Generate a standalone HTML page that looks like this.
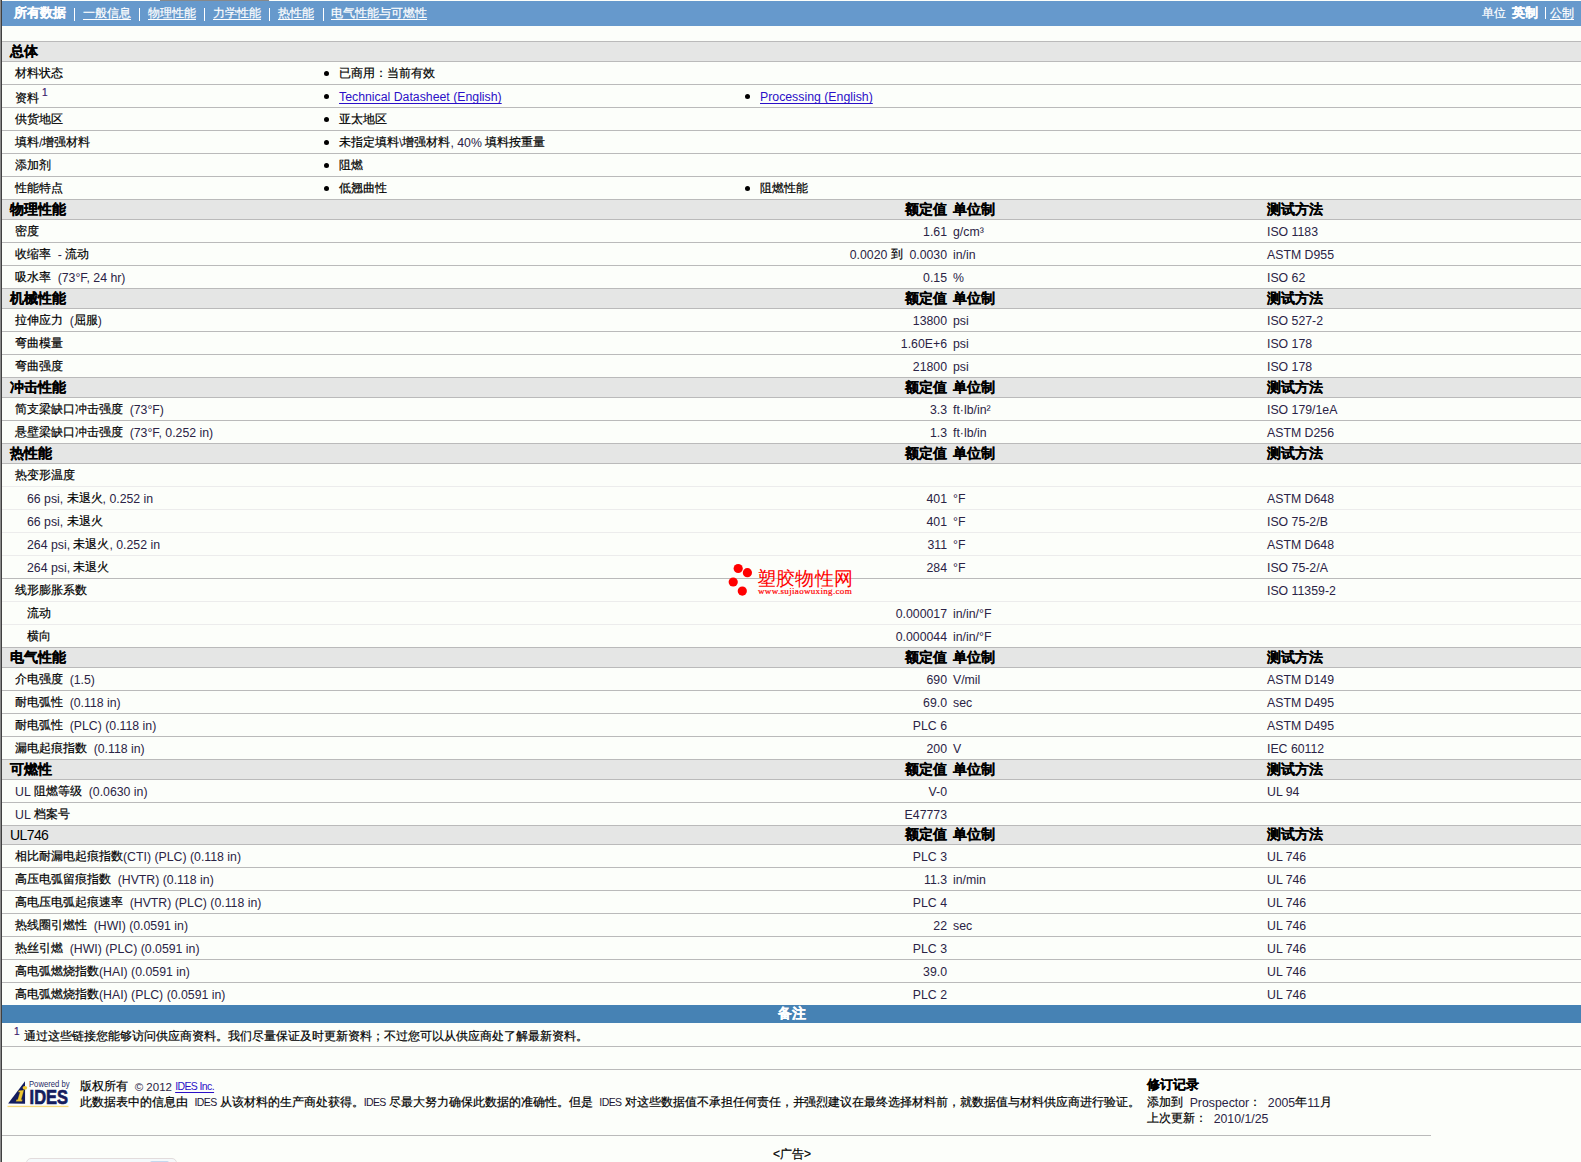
<!DOCTYPE html><html><head><meta charset="utf-8"><style>
body{margin:0;width:1581px;height:1162px;overflow:hidden;background:#fcfefa;-webkit-text-stroke:0.2px currentColor;font-family:"Liberation Sans",sans-serif;font-size:12px;color:#000;position:relative}
.a{position:absolute;white-space:nowrap}
.ln{position:absolute;left:2px;width:1579px;height:1px;background:#bababa}
.lt{position:absolute;left:2px;width:1579px;height:1px;background:#ececec}
.hb{position:absolute;left:2px;width:1579px;background:#e5e6e5}
.t{position:absolute;white-space:nowrap;line-height:22px;height:22px}
.th{position:absolute;white-space:nowrap;line-height:19px;height:19px;font-weight:bold;font-size:13.6px}
.th .l{font-size:12.5px;top:0}
.l{font-size:12.3px;color:#2a2345;position:relative;top:1px;-webkit-text-stroke:0}
.f,a,svg text{-webkit-text-stroke:0}
.r{text-align:right}
.f{font-size:10.5px;letter-spacing:-0.6px;color:#1d1635}
a{color:#2b10c8;text-decoration:underline;text-underline-offset:2px;text-decoration-skip-ink:none}
a .l{color:#2b10c8}
u{text-underline-offset:2px;text-decoration-skip-ink:none}
sup{font-size:9px;vertical-align:top;position:relative;top:-2px;color:#3b1a6a;margin-left:4px;line-height:9px}
.bul{position:absolute;width:5px;height:5px;border-radius:50%;background:#000}
.nav{color:#fff}
.nav span{position:absolute;white-space:nowrap;top:1px;line-height:24px}

</style></head><body>
<div class="a" style="left:0;top:0;width:1px;height:1162px;background:#8a8a8a"></div>
<div class="a" style="left:1px;top:0;width:1px;height:1162px;background:#404040"></div>
<div class="a" style="left:160px;top:0;width:109px;height:1px;background:#888"></div>
<div class="a" style="left:2px;top:1px;width:1579px;height:25px;background:#6699cc"></div>
<div class="a nav " style="left:14px;top:1px;line-height:24px;color:#fff"><b style="font-size:12.8px">所有数据</b></div>
<div class="a" style="left:74px;top:8px;width:1px;height:13px;background:#fff"></div>
<div class="a" style="left:139px;top:8px;width:1px;height:13px;background:#fff"></div>
<div class="a" style="left:204px;top:8px;width:1px;height:13px;background:#fff"></div>
<div class="a" style="left:269px;top:8px;width:1px;height:13px;background:#fff"></div>
<div class="a" style="left:323px;top:8px;width:1px;height:13px;background:#fff"></div>
<div class="a" style="left:1545px;top:7px;width:1px;height:12px;background:#fff"></div>
<div class="a nav " style="left:83px;top:1px;line-height:24px;color:#fff"><u>一般信息</u></div>
<div class="a nav " style="left:148px;top:1px;line-height:24px;color:#fff"><u>物理性能</u></div>
<div class="a nav " style="left:213px;top:1px;line-height:24px;color:#fff"><u>力学性能</u></div>
<div class="a nav " style="left:278px;top:1px;line-height:24px;color:#fff"><u>热性能</u></div>
<div class="a nav " style="left:331px;top:1px;line-height:24px;color:#fff"><u>电气性能与可燃性</u></div>
<div class="a nav " style="left:1482px;top:1px;line-height:24px;color:#fff">单位</div>
<div class="a nav " style="left:1512px;top:1px;line-height:24px;color:#fff"><b style="font-size:13px">英制</b></div>
<div class="a nav " style="left:1550px;top:1px;line-height:24px;color:#fff"><u>公制</u></div>
<div class="ln" style="top:41px"></div>
<div class="hb" style="top:42px;height:19px"></div>
<div class="ln" style="top:61px"></div>
<div class="th" style="left:10px;top:42px">总体</div>
<div class="ln" style="top:199px"></div>
<div class="hb" style="top:200px;height:19px"></div>
<div class="ln" style="top:219px"></div>
<div class="th" style="left:10px;top:200px">物理性能</div>
<div class="th r" style="left:846px;width:101px;top:200px">额定值</div>
<div class="th" style="left:953px;top:200px">单位制</div>
<div class="th" style="left:1267px;top:200px">测试方法</div>
<div class="t" style="left:15px;top:220px">密度</div>
<div class="t r" style="left:646px;width:301px;top:220px"><span class="l">1.61</span></div>
<div class="t" style="left:953px;top:220px"><span class="l">g/cm³</span></div>
<div class="t" style="left:1267px;top:220px"><span class="l">ISO 1183</span></div>
<div class="t" style="left:15px;top:243px">收缩率 &nbsp;<span class="l">-</span> 流动</div>
<div class="t r" style="left:646px;width:301px;top:243px"><span class="l">0.0020</span> 到 &nbsp;<span class="l">0.0030</span></div>
<div class="t" style="left:953px;top:243px"><span class="l">in/in</span></div>
<div class="t" style="left:1267px;top:243px"><span class="l">ASTM D955</span></div>
<div class="t" style="left:15px;top:266px">吸水率 &nbsp;<span class="l">(73°F, 24 hr)</span></div>
<div class="t r" style="left:646px;width:301px;top:266px"><span class="l">0.15</span></div>
<div class="t" style="left:953px;top:266px"><span class="l">%</span></div>
<div class="t" style="left:1267px;top:266px"><span class="l">ISO 62</span></div>
<div class="ln" style="top:288px"></div>
<div class="hb" style="top:289px;height:19px"></div>
<div class="ln" style="top:308px"></div>
<div class="th" style="left:10px;top:289px">机械性能</div>
<div class="th r" style="left:846px;width:101px;top:289px">额定值</div>
<div class="th" style="left:953px;top:289px">单位制</div>
<div class="th" style="left:1267px;top:289px">测试方法</div>
<div class="t" style="left:15px;top:309px">拉伸应力 &nbsp;<span class="l">(</span>屈服<span class="l">)</span></div>
<div class="t r" style="left:646px;width:301px;top:309px"><span class="l">13800</span></div>
<div class="t" style="left:953px;top:309px"><span class="l">psi</span></div>
<div class="t" style="left:1267px;top:309px"><span class="l">ISO 527-2</span></div>
<div class="t" style="left:15px;top:332px">弯曲模量</div>
<div class="t r" style="left:646px;width:301px;top:332px"><span class="l">1.60E+6</span></div>
<div class="t" style="left:953px;top:332px"><span class="l">psi</span></div>
<div class="t" style="left:1267px;top:332px"><span class="l">ISO 178</span></div>
<div class="t" style="left:15px;top:355px">弯曲强度</div>
<div class="t r" style="left:646px;width:301px;top:355px"><span class="l">21800</span></div>
<div class="t" style="left:953px;top:355px"><span class="l">psi</span></div>
<div class="t" style="left:1267px;top:355px"><span class="l">ISO 178</span></div>
<div class="ln" style="top:377px"></div>
<div class="hb" style="top:378px;height:19px"></div>
<div class="ln" style="top:397px"></div>
<div class="th" style="left:10px;top:378px">冲击性能</div>
<div class="th r" style="left:846px;width:101px;top:378px">额定值</div>
<div class="th" style="left:953px;top:378px">单位制</div>
<div class="th" style="left:1267px;top:378px">测试方法</div>
<div class="t" style="left:15px;top:398px">简支梁缺口冲击强度 &nbsp;<span class="l">(73°F)</span></div>
<div class="t r" style="left:646px;width:301px;top:398px"><span class="l">3.3</span></div>
<div class="t" style="left:953px;top:398px"><span class="l">ft·lb/in²</span></div>
<div class="t" style="left:1267px;top:398px"><span class="l">ISO 179/1eA</span></div>
<div class="t" style="left:15px;top:421px">悬壁梁缺口冲击强度 &nbsp;<span class="l">(73°F, 0.252 in)</span></div>
<div class="t r" style="left:646px;width:301px;top:421px"><span class="l">1.3</span></div>
<div class="t" style="left:953px;top:421px"><span class="l">ft·lb/in</span></div>
<div class="t" style="left:1267px;top:421px"><span class="l">ASTM D256</span></div>
<div class="ln" style="top:443px"></div>
<div class="hb" style="top:444px;height:19px"></div>
<div class="ln" style="top:463px"></div>
<div class="th" style="left:10px;top:444px">热性能</div>
<div class="th r" style="left:846px;width:101px;top:444px">额定值</div>
<div class="th" style="left:953px;top:444px">单位制</div>
<div class="th" style="left:1267px;top:444px">测试方法</div>
<div class="t" style="left:15px;top:464px">热变形温度</div>
<div class="t" style="left:27px;top:487px"><span class="l">66 psi,</span> 未退火<span class="l">, 0.252 in</span></div>
<div class="t r" style="left:646px;width:301px;top:487px"><span class="l">401</span></div>
<div class="t" style="left:953px;top:487px"><span class="l">°F</span></div>
<div class="t" style="left:1267px;top:487px"><span class="l">ASTM D648</span></div>
<div class="t" style="left:27px;top:510px"><span class="l">66 psi,</span> 未退火</div>
<div class="t r" style="left:646px;width:301px;top:510px"><span class="l">401</span></div>
<div class="t" style="left:953px;top:510px"><span class="l">°F</span></div>
<div class="t" style="left:1267px;top:510px"><span class="l">ISO 75-2/B</span></div>
<div class="t" style="left:27px;top:533px"><span class="l">264 psi,</span> 未退火<span class="l">, 0.252 in</span></div>
<div class="t r" style="left:646px;width:301px;top:533px"><span class="l">311</span></div>
<div class="t" style="left:953px;top:533px"><span class="l">°F</span></div>
<div class="t" style="left:1267px;top:533px"><span class="l">ASTM D648</span></div>
<div class="t" style="left:27px;top:556px"><span class="l">264 psi,</span> 未退火</div>
<div class="t r" style="left:646px;width:301px;top:556px"><span class="l">284</span></div>
<div class="t" style="left:953px;top:556px"><span class="l">°F</span></div>
<div class="t" style="left:1267px;top:556px"><span class="l">ISO 75-2/A</span></div>
<div class="t" style="left:15px;top:579px">线形膨胀系数</div>
<div class="t" style="left:1267px;top:579px"><span class="l">ISO 11359-2</span></div>
<div class="t" style="left:27px;top:602px">流动</div>
<div class="t r" style="left:646px;width:301px;top:602px"><span class="l">0.000017</span></div>
<div class="t" style="left:953px;top:602px"><span class="l">in/in/°F</span></div>
<div class="t" style="left:27px;top:625px">横向</div>
<div class="t r" style="left:646px;width:301px;top:625px"><span class="l">0.000044</span></div>
<div class="t" style="left:953px;top:625px"><span class="l">in/in/°F</span></div>
<div class="ln" style="top:647px"></div>
<div class="hb" style="top:648px;height:19px"></div>
<div class="ln" style="top:667px"></div>
<div class="th" style="left:10px;top:648px">电气性能</div>
<div class="th r" style="left:846px;width:101px;top:648px">额定值</div>
<div class="th" style="left:953px;top:648px">单位制</div>
<div class="th" style="left:1267px;top:648px">测试方法</div>
<div class="t" style="left:15px;top:668px">介电强度 &nbsp;<span class="l">(1.5)</span></div>
<div class="t r" style="left:646px;width:301px;top:668px"><span class="l">690</span></div>
<div class="t" style="left:953px;top:668px"><span class="l">V/mil</span></div>
<div class="t" style="left:1267px;top:668px"><span class="l">ASTM D149</span></div>
<div class="t" style="left:15px;top:691px">耐电弧性 &nbsp;<span class="l">(0.118 in)</span></div>
<div class="t r" style="left:646px;width:301px;top:691px"><span class="l">69.0</span></div>
<div class="t" style="left:953px;top:691px"><span class="l">sec</span></div>
<div class="t" style="left:1267px;top:691px"><span class="l">ASTM D495</span></div>
<div class="t" style="left:15px;top:714px">耐电弧性 &nbsp;<span class="l">(PLC) (0.118 in)</span></div>
<div class="t r" style="left:646px;width:301px;top:714px"><span class="l">PLC 6</span></div>
<div class="t" style="left:1267px;top:714px"><span class="l">ASTM D495</span></div>
<div class="t" style="left:15px;top:737px">漏电起痕指数 &nbsp;<span class="l">(0.118 in)</span></div>
<div class="t r" style="left:646px;width:301px;top:737px"><span class="l">200</span></div>
<div class="t" style="left:953px;top:737px"><span class="l">V</span></div>
<div class="t" style="left:1267px;top:737px"><span class="l">IEC 60112</span></div>
<div class="ln" style="top:759px"></div>
<div class="hb" style="top:760px;height:19px"></div>
<div class="ln" style="top:779px"></div>
<div class="th" style="left:10px;top:760px">可燃性</div>
<div class="th r" style="left:846px;width:101px;top:760px">额定值</div>
<div class="th" style="left:953px;top:760px">单位制</div>
<div class="th" style="left:1267px;top:760px">测试方法</div>
<div class="t" style="left:15px;top:780px"><span class="l">UL</span> 阻燃等级 &nbsp;<span class="l">(0.0630 in)</span></div>
<div class="t r" style="left:646px;width:301px;top:780px"><span class="l">V-0</span></div>
<div class="t" style="left:1267px;top:780px"><span class="l">UL 94</span></div>
<div class="t" style="left:15px;top:803px"><span class="l">UL</span> 档案号</div>
<div class="t r" style="left:646px;width:301px;top:803px"><span class="l">E47773</span></div>
<div class="ln" style="top:825px"></div>
<div class="hb" style="top:826px;height:18px"></div>
<div class="ln" style="top:844px"></div>
<div class="th" style="left:10px;top:826px;font-weight:normal"><span class="l" style="font-size:14px;top:-0.5px;letter-spacing:-0.6px;color:#000">UL746</span></div>
<div class="th r" style="left:846px;width:101px;top:825px">额定值</div>
<div class="th" style="left:953px;top:825px">单位制</div>
<div class="th" style="left:1267px;top:825px">测试方法</div>
<div class="t" style="left:15px;top:845px">相比耐漏电起痕指数<span class="l">(CTI) (PLC) (0.118 in)</span></div>
<div class="t r" style="left:646px;width:301px;top:845px"><span class="l">PLC 3</span></div>
<div class="t" style="left:1267px;top:845px"><span class="l">UL 746</span></div>
<div class="t" style="left:15px;top:868px">高压电弧留痕指数 &nbsp;<span class="l">(HVTR) (0.118 in)</span></div>
<div class="t r" style="left:646px;width:301px;top:868px"><span class="l">11.3</span></div>
<div class="t" style="left:953px;top:868px"><span class="l">in/min</span></div>
<div class="t" style="left:1267px;top:868px"><span class="l">UL 746</span></div>
<div class="t" style="left:15px;top:891px">高电压电弧起痕速率 &nbsp;<span class="l">(HVTR) (PLC) (0.118 in)</span></div>
<div class="t r" style="left:646px;width:301px;top:891px"><span class="l">PLC 4</span></div>
<div class="t" style="left:1267px;top:891px"><span class="l">UL 746</span></div>
<div class="t" style="left:15px;top:914px">热线圈引燃性 &nbsp;<span class="l">(HWI) (0.0591 in)</span></div>
<div class="t r" style="left:646px;width:301px;top:914px"><span class="l">22</span></div>
<div class="t" style="left:953px;top:914px"><span class="l">sec</span></div>
<div class="t" style="left:1267px;top:914px"><span class="l">UL 746</span></div>
<div class="t" style="left:15px;top:937px">热丝引燃 &nbsp;<span class="l">(HWI) (PLC) (0.0591 in)</span></div>
<div class="t r" style="left:646px;width:301px;top:937px"><span class="l">PLC 3</span></div>
<div class="t" style="left:1267px;top:937px"><span class="l">UL 746</span></div>
<div class="t" style="left:15px;top:960px">高电弧燃烧指数<span class="l">(HAI) (0.0591 in)</span></div>
<div class="t r" style="left:646px;width:301px;top:960px"><span class="l">39.0</span></div>
<div class="t" style="left:1267px;top:960px"><span class="l">UL 746</span></div>
<div class="t" style="left:15px;top:983px">高电弧燃烧指数<span class="l">(HAI) (PLC) (0.0591 in)</span></div>
<div class="t r" style="left:646px;width:301px;top:983px"><span class="l">PLC 2</span></div>
<div class="t" style="left:1267px;top:983px"><span class="l">UL 746</span></div>
<div class="ln" style="top:61px"></div>
<div class="t" style="left:15px;top:62px">材料状态</div>
<div class="bul" style="left:324px;top:71px"></div>
<div class="t" style="left:339px;top:62px">已商用：当前有效</div>
<div class="ln" style="top:84px"></div>
<div class="t" style="left:15px;top:87px">资料</div>
<div class="a" style="left:42px;top:88px;font-size:10px;line-height:10px;color:#3b1a6a">1</div>
<div class="bul" style="left:324px;top:94px"></div>
<div class="t" style="left:339px;top:85px"><a><span class="l">Technical Datasheet (English)</span></a></div>
<div class="bul" style="left:745px;top:94px"></div>
<div class="t" style="left:760px;top:85px"><a><span class="l">Processing (English)</span></a></div>
<div class="ln" style="top:107px"></div>
<div class="t" style="left:15px;top:108px">供货地区</div>
<div class="bul" style="left:324px;top:117px"></div>
<div class="t" style="left:339px;top:108px">亚太地区</div>
<div class="ln" style="top:130px"></div>
<div class="t" style="left:15px;top:131px">填料<span class="l">/</span>增强材料</div>
<div class="bul" style="left:324px;top:140px"></div>
<div class="t" style="left:339px;top:131px">未指定填料<span class="l">\</span>增强材料<span class="l">, 40%</span> 填料按重量</div>
<div class="ln" style="top:153px"></div>
<div class="t" style="left:15px;top:154px">添加剂</div>
<div class="bul" style="left:324px;top:163px"></div>
<div class="t" style="left:339px;top:154px">阻燃</div>
<div class="ln" style="top:176px"></div>
<div class="t" style="left:15px;top:177px">性能特点</div>
<div class="bul" style="left:324px;top:186px"></div>
<div class="t" style="left:339px;top:177px">低翘曲性</div>
<div class="bul" style="left:745px;top:186px"></div>
<div class="t" style="left:760px;top:177px">阻燃性能</div>
<div class="ln" style="top:242px"></div>
<div class="ln" style="top:265px"></div>
<div class="ln" style="top:331px"></div>
<div class="ln" style="top:354px"></div>
<div class="ln" style="top:420px"></div>
<div class="lt" style="top:486px"></div>
<div class="lt" style="top:509px"></div>
<div class="lt" style="top:532px"></div>
<div class="lt" style="top:555px"></div>
<div class="ln" style="top:578px"></div>
<div class="lt" style="top:601px"></div>
<div class="lt" style="top:624px"></div>
<div class="ln" style="top:690px"></div>
<div class="ln" style="top:713px"></div>
<div class="ln" style="top:736px"></div>
<div class="ln" style="top:802px"></div>
<div class="ln" style="top:867px"></div>
<div class="ln" style="top:890px"></div>
<div class="ln" style="top:913px"></div>
<div class="ln" style="top:936px"></div>
<div class="ln" style="top:959px"></div>
<div class="ln" style="top:982px"></div>
<div class="ln" style="top:61px"></div>
<div class="a" style="left:2px;top:1005px;width:1579px;height:18px;background:#4682b4"></div>
<div class="a" style="left:2px;top:1005px;width:1579px;height:18px;line-height:17px;text-align:center;color:#fff;font-weight:bold;font-size:14px">备注</div>
<div class="a" style="left:14px;top:1027px;font-size:10px;line-height:10px;color:#3b1a6a">1</div>
<div class="t" style="left:23.5px;top:1025px">通过这些链接您能够访问供应商资料。我们尽量保证及时更新资料；不过您可以从供应商处了解最新资料。</div>
<div class="ln" style="top:1046px"></div>
<div class="ln" style="top:1069px"></div>
<div class="a" style="left:2px;top:1135px;width:1429px;height:1px;background:#bababa"></div>
<div class="a" style="left:80px;top:1078px;line-height:16px">版权所有 &nbsp;<span class="l" style="font-size:11.5px">© 2012 </span><a class="f" style="color:#2b10c8">IDES Inc.</a></div>
<div class="a" style="left:80px;top:1094px;line-height:16px;letter-spacing:-0.02px">此数据表中的信息由 &nbsp;<span class="f">IDES</span> 从该材料的生产商处获得。<span class="f">IDES</span> 尽最大努力确保此数据的准确性。但是 &nbsp;<span class="f">IDES</span> 对这些数据值不承担任何责任，并强烈建议在最终选择材料前，就数据值与材料供应商进行验证。</div>
<div class="a" style="left:1147px;top:1077px;line-height:16px;font-weight:bold;font-size:13px">修订记录</div>
<div class="a" style="left:1147px;top:1094px;line-height:16px">添加到 &nbsp;<span class="l">Prospector</span>： &nbsp;<span class="l">2005</span>年<span class="l">11</span>月</div>
<div class="a" style="left:1147px;top:1110px;line-height:16px">上次更新： &nbsp;<span class="l">2010/1/25</span></div>
<div class="a" style="left:773px;top:1146px;line-height:16px">&lt;广告&gt;</div>
<svg class="a" style="left:0;top:1075px" width="80" height="40" viewBox="0 0 80 40">
<polygon points="8.1,28.6 25,6.3 25.1,28.8" fill="#141d5e"/>
<path d="M18.6,15.4 L24,15.0 L21.4,24.4 L22.6,24.4 L22,26.4 L15.8,26.4 L16.4,24.4 L17.6,24.4 L19.8,17.3 L18.2,17.3 Z" fill="#f0c832" stroke="#1a1a30" stroke-width="0.3"/>
<ellipse cx="24.9" cy="12.8" rx="2.3" ry="1.9" fill="#f0c832"/>
<text x="29" y="11.8" font-family="Liberation Sans" font-size="8.3" fill="#1f2a66" textLength="40.5" lengthAdjust="spacingAndGlyphs">Powered by</text>
<text x="29.6" y="29.0" font-family="Liberation Sans" font-weight="bold" font-size="19.5" fill="#141d5e" stroke="#141d5e" stroke-width="0.7" textLength="38.3" lengthAdjust="spacingAndGlyphs">IDES</text>
<rect x="7.5" y="30.8" width="61" height="1.3" fill="#f6d87a"/>
</svg>
<svg class="a" style="left:725px;top:560px" width="140" height="40" viewBox="0 0 140 40">
<circle cx="13.2" cy="8.5" r="4.6" fill="#f00"/><circle cx="22.4" cy="12.7" r="4.6" fill="#f00"/>
<circle cx="8.2" cy="22" r="4.6" fill="#f00"/><circle cx="17.3" cy="31.1" r="4.6" fill="#f00"/>
</svg>
<div class="a" style="left:757px;top:567.5px;font-size:18.5px;line-height:22px;color:#f00;font-weight:300;letter-spacing:0.2px;-webkit-text-stroke:0">塑胶物性网</div>
<div class="a" style="left:758px;top:586px;font-size:9px;line-height:10px;color:#f00;letter-spacing:0.33px;font-family:'Liberation Serif',serif">www.sujiaowuxing.com</div>
<div class="a" style="left:26px;top:1158px;width:149px;height:20px;border:1px solid #e2dcdc;border-radius:5px;background:#f5f9fb"></div>
<div class="a" style="left:150px;top:1161px;width:19px;height:4px;background:#c4d8ee;border-radius:2px 2px 0 0"></div>
</body></html>
